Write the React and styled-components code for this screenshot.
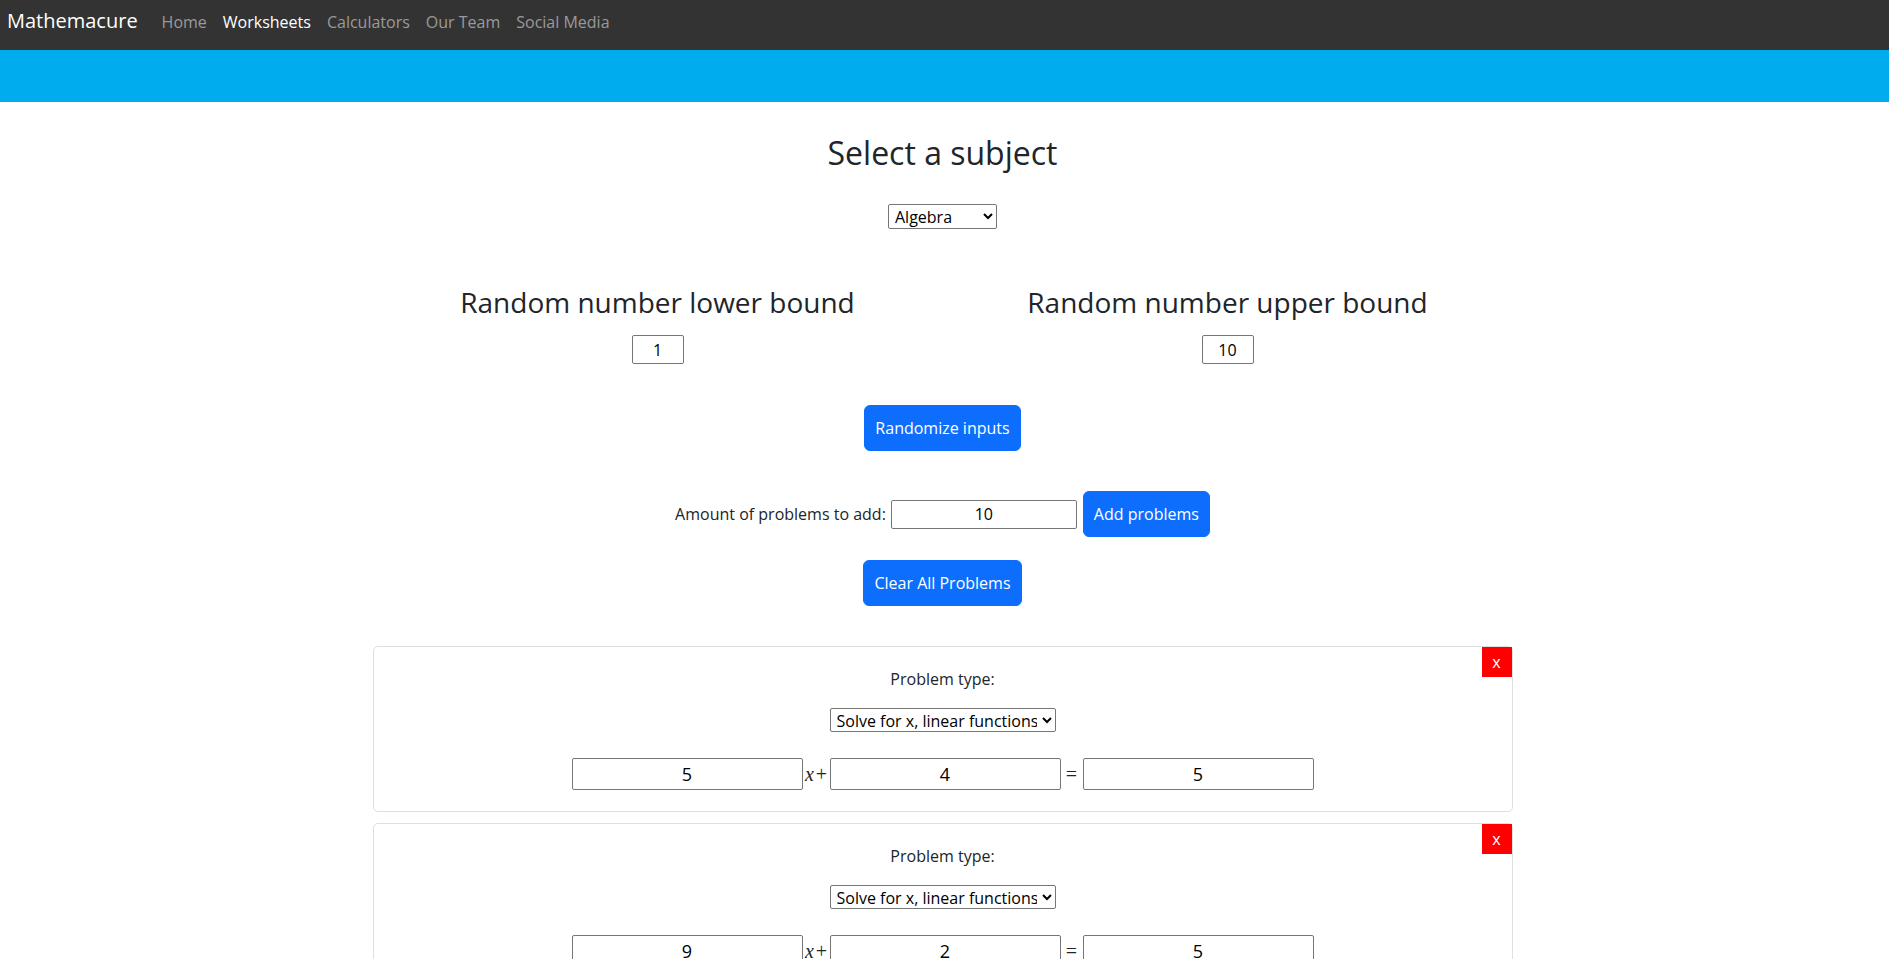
import React from 'react';
import styled, { createGlobalStyle } from 'styled-components';

const GlobalStyle = createGlobalStyle`
  html, body { margin: 0; padding: 0; }
  body {
    font-family: "Open Sans", "Noto Sans", sans-serif;
    font-size: 16px;
    color: #212529;
    background: #fff;
  }
  *, *::before, *::after { box-sizing: border-box; }
`;

const Navbar = styled.nav`
  height: 50px;
  background: #333333;
  display: flex;
  align-items: baseline;
  padding: 6px 7px 0;
`;

const Brand = styled.a`
  font-size: 20px;
  line-height: 30px;
  color: #fff;
  margin-right: 16px;
  text-decoration: none;
`;

const NavLink = styled.a`
  font-size: 16px;
  line-height: 24px;
  padding: 0 8px;
  color: ${(p) => (p.$active ? '#ffffff' : '#9a9a9a')};
  text-decoration: none;
`;

const Banner = styled.div`
  height: 52px;
  background: #00acee;
`;

const Container = styled.main`
  width: 1140px;
  margin: 0 calc(50% - 568px) 0 calc(50% - 572px);
  display: flex;
  flex-direction: column;
  align-items: center;
`;

const Title = styled.h2`
  margin: 32px 0 0;
  font-size: 32px;
  font-weight: 400;
  line-height: 38px;
`;

const NativeSelect = styled.select`
  font-family: "Open Sans", "Noto Sans", sans-serif;
  font-size: 16px;
  color: #000;
  background: #fff;
  border: 1px solid #767676;
  border-radius: 2px;
  padding: 0 2px;
  width: ${(p) => p.$w}px;
  height: ${(p) => p.$h}px;
  margin-top: ${(p) => p.$mt}px;
`;

const BoundsRow = styled.section`
  margin-top: 56px;
  width: 100%;
  display: grid;
  grid-template-columns: 1fr 1fr;
`;

const BoundCol = styled.div`
  display: flex;
  flex-direction: column;
  align-items: center;
`;

const BoundTitle = styled.h3`
  margin: 0;
  font-size: 28px;
  font-weight: 400;
  line-height: 34px;
`;

const TextInput = styled.input`
  font-family: "Open Sans", "Noto Sans", sans-serif;
  font-size: ${(p) => p.$fs || 16}px;
  color: #000;
  text-align: center;
  border: 1px solid #767676;
  border-radius: 2px;
  padding: 0 2px;
  background: #fff;
  width: ${(p) => p.$w}px;
  height: ${(p) => p.$h}px;
  margin-top: ${(p) => p.$mt || 0}px;
  margin-right: ${(p) => p.$mr || 0}px;
`;

const PrimaryButton = styled.button`
  font-family: "Open Sans", "Noto Sans", sans-serif;
  font-size: 16px;
  line-height: 24px;
  padding: 10px 10px;
  color: #fff;
  background: #0d6efd;
  border: 1px solid #0d6efd;
  border-radius: 6px;
  margin-top: ${(p) => p.$mt || 0}px;
  cursor: pointer;
`;

const AmountRow = styled.div`
  margin-top: 40px;
  display: flex;
  align-items: center;
`;

const AmountLabel = styled.label`
  line-height: 24px;
  margin-right: 5px;
`;

const CardList = styled.div`
  margin-top: 40px;
  width: 100%;
  display: flex;
  flex-direction: column;
  gap: 11px;
`;

const Card = styled.div`
  position: relative;
  border: 1px solid #dfdfdf;
  border-radius: 5px;
  padding: 20px 0 21px;
  display: flex;
  flex-direction: column;
  align-items: center;
`;

const RemoveButton = styled.button`
  position: absolute;
  top: 0;
  right: 0;
  width: 30px;
  height: 30px;
  padding: 0;
  border: none;
  background: #ff0000;
  color: #fff;
  font-family: "Open Sans", "Noto Sans", sans-serif;
  font-size: 16px;
  line-height: 28px;
  cursor: pointer;
`;

const ProblemLabel = styled.div`
  line-height: 24px;
`;

const EquationRow = styled.div`
  margin-top: 26px;
  display: flex;
  align-items: baseline;
`;

const MathSym = styled.span`
  font-family: "Liberation Serif", "DejaVu Serif", serif;
  font-size: 20px;
  color: #212529;
  width: ${(p) => p.$w}px;
  display: inline-flex;
  justify-content: center;
`;

const MathVar = styled.i`
  font-style: italic;
  margin-right: 2px;
`;

const MathOp = styled.span`
  font-weight: 300;
`;

const problems = [
  { a: 5, b: 4, c: 5 },
  { a: 9, b: 2, c: 5 },
];

function ProblemCard({ a, b, c }) {
  return (
    <Card>
      <RemoveButton>x</RemoveButton>
      <ProblemLabel>Problem type:</ProblemLabel>
      <NativeSelect $w={226} $h={24} $mt={17} defaultValue="linear">
        <option value="linear">Solve for x, linear functions</option>
        <option value="quadratic">Solve for x, quadratic functions</option>
      </NativeSelect>
      <EquationRow>
        <TextInput $w={231} $h={32} $fs={18} defaultValue={a} />
        <MathSym $w={27}>
          <MathVar>x</MathVar>
          <MathOp>+</MathOp>
        </MathSym>
        <TextInput $w={231} $h={32} $fs={18} defaultValue={b} />
        <MathSym $w={22}>
          <MathOp>=</MathOp>
        </MathSym>
        <TextInput $w={231} $h={32} $fs={18} defaultValue={c} />
      </EquationRow>
    </Card>
  );
}

export default function App() {
  return (
    <>
      <GlobalStyle />
      <Navbar>
        <Brand href="#">Mathemacure</Brand>
        <NavLink href="#">Home</NavLink>
        <NavLink href="#" $active>Worksheets</NavLink>
        <NavLink href="#">Calculators</NavLink>
        <NavLink href="#">Our Team</NavLink>
        <NavLink href="#">Social Media</NavLink>
      </Navbar>
      <Banner />
      <Container>
        <Title>Select a subject</Title>
        <NativeSelect $w={109} $h={25} $mt={32} defaultValue="algebra">
          <option value="algebra">Algebra</option>
          <option value="geometry">Geometry</option>
        </NativeSelect>
        <BoundsRow>
          <BoundCol>
            <BoundTitle>Random number lower bound</BoundTitle>
            <TextInput $w={52} $h={29} $mt={16} defaultValue="1" />
          </BoundCol>
          <BoundCol>
            <BoundTitle>Random number upper bound</BoundTitle>
            <TextInput $w={52} $h={29} $mt={16} defaultValue="10" />
          </BoundCol>
        </BoundsRow>
        <PrimaryButton $mt={41}>Randomize inputs</PrimaryButton>
        <AmountRow>
          <AmountLabel>Amount of problems to add:</AmountLabel>
          <TextInput $w={186} $h={29} $mr={6} defaultValue="10" />
          <PrimaryButton>Add problems</PrimaryButton>
        </AmountRow>
        <PrimaryButton $mt={23}>Clear All Problems</PrimaryButton>
        <CardList>
          {problems.map((p, i) => (
            <ProblemCard key={i} {...p} />
          ))}
        </CardList>
      </Container>
    </>
  );
}
